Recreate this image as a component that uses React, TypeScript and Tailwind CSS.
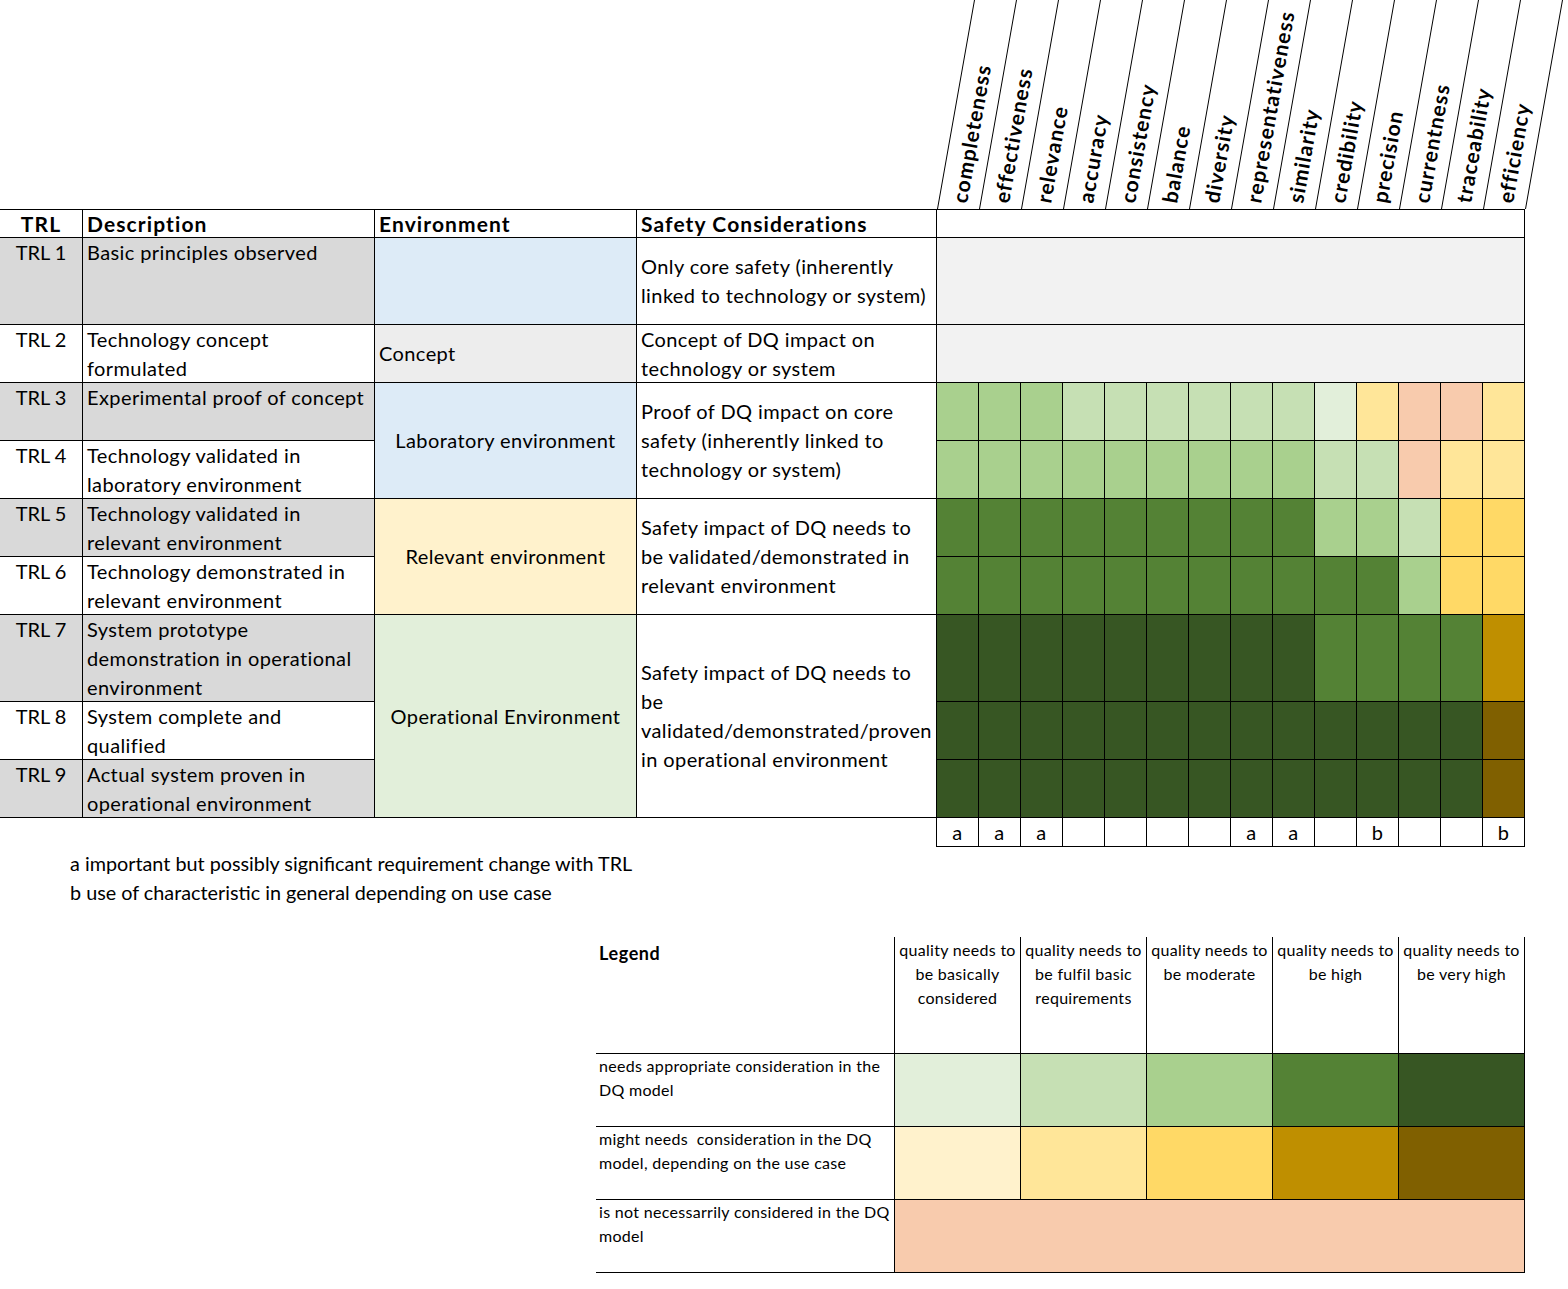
import React from "react";

const C: Record<string, string> = {
  L1: "bg-[#e2efda]",
  L2: "bg-[#c6e0b4]",
  L3: "bg-[#a9d08e]",
  L4: "bg-[#548235]",
  L5: "bg-[#375623]",
  Y1: "bg-[#fff2cc]",
  Y2: "bg-[#ffe699]",
  Y3: "bg-[#ffd966]",
  Y4: "bg-[#bf8f00]",
  Y5: "bg-[#806000]",
  N: "bg-[#f8cbad]",
};

const rep = (v: string, n: number) => Array.from({ length: n }, () => v);

const matrix: Record<number, string[]> = {
  3: ["L3", "L3", "L3", ...rep("L2", 6), "L1", "Y2", "N", "N", "Y2"],
  4: [...rep("L3", 9), "L2", "L2", "N", "Y2", "Y2"],
  5: [...rep("L4", 9), "L3", "L3", "L2", "Y3", "Y3"],
  6: [...rep("L4", 11), "L3", "Y3", "Y3"],
  7: [...rep("L5", 9), ...rep("L4", 4), "Y4"],
  8: [...rep("L5", 13), "Y5"],
  9: [...rep("L5", 13), "Y5"],
};

const headers = [
  "completeness",
  "effectiveness",
  "relevance",
  "accuracy",
  "consistency",
  "balance",
  "diversity",
  "representativeness",
  "similarity",
  "credibility",
  "precision",
  "currentness",
  "traceability",
  "efficiency",
];

const footer = ["a", "a", "a", "", "", "", "", "a", "a", "", "b", "", "", "b"];

const desc: Record<number, string[]> = {
  1: ["Basic principles observed"],
  2: ["Technology concept", "formulated"],
  3: ["Experimental proof of concept"],
  4: ["Technology validated in", "laboratory environment"],
  5: ["Technology validated in", "relevant environment"],
  6: ["Technology demonstrated in", "relevant environment"],
  7: ["System prototype", "demonstration in operational", "environment"],
  8: ["System complete and", "qualified"],
  9: ["Actual system proven in", "operational environment"],
};

const Lines = ({ lines }: { lines: string[] }) => (
  <div>
    {lines.map((l, i) => (
      <div key={i} className="whitespace-pre">
        {l}
      </div>
    ))}
  </div>
);

const cell = "border-r border-b border-black";
const hd = "font-bold text-[21px] tracking-[1.1px]";

function TrlCells({ n }: { n: number }) {
  const shade = n % 2 === 1 ? "bg-[#d9d9d9]" : "bg-white";
  return (
    <>
      <div className={`${cell} ${shade} text-center tracking-normal`}>TRL {n}</div>
      <div className={`${cell} ${shade} pl-[4px]`}>
        <Lines lines={desc[n]} />
      </div>
    </>
  );
}

function MatrixRow({ n }: { n: number }) {
  return (
    <>
      {matrix[n].map((k, i) => (
        <div key={i} className={`${cell} ${C[k]}`} />
      ))}
    </>
  );
}

function Safety({ lines, span }: { lines: string[]; span: string }) {
  return (
    <div className={`${cell} ${span} bg-white flex items-center pl-[4px]`}>
      <Lines lines={lines} />
    </div>
  );
}

export default function App() {
  return (
    <div className="w-[1568px] h-[1289px] bg-white text-black font-['Lato',sans-serif] text-[20px] leading-[29px] tracking-[0.4px] overflow-hidden">
      {/* rotated column headers */}
      <svg width="1568" height="209" className="block">
        {Array.from({ length: 15 }, (_, i) => {
          const x0 = 937 + 42 * i;
          return (
            <line key={i} x1={x0 + 0.5} y1={209} x2={x0 + 37.5} y2={0} stroke="#000" strokeWidth={1} />
          );
        })}
        {headers.map((h, i) => {
          const x = 937 + 42 * i + 30;
          const y = 204;
          return (
            <text
              key={h}
              x={x}
              y={y}
              transform={`rotate(-80 ${x} ${y})`}
              fontFamily="Lato, sans-serif"
              fontWeight={700}
              fontSize={21}
              letterSpacing={1}
              fill="#000"
            >
              {h}
            </text>
          );
        })}
      </svg>

      {/* main table */}
      <div className="grid grid-cols-[83px_292px_262px_300px_repeat(14,42px)] grid-rows-[29px_87px_58px_58px_58px_58px_58px_87px_58px_58px_29px] w-[1525px]">
        {/* header row */}
        <div className={`${cell} border-t ${hd} text-center leading-[27px]`}>TRL</div>
        <div className={`${cell} border-t ${hd} pl-[4px] leading-[27px]`}>Description</div>
        <div className={`${cell} border-t ${hd} pl-[4px] leading-[27px]`}>Environment</div>
        <div className={`${cell} border-t ${hd} pl-[4px] leading-[27px]`}>Safety Considerations</div>
        <div className={`${cell} border-t col-span-14`} />

        {/* TRL 1 */}
        <TrlCells n={1} />
        <div className={`${cell} bg-[#ddebf7]`} />
        <Safety lines={["Only core safety (inherently", "linked to technology or system)"]} span="" />
        <div className={`${cell} col-span-14 bg-[#f2f2f2]`} />

        {/* TRL 2 */}
        <TrlCells n={2} />
        <div className={`${cell} bg-[#ededed] flex items-center pl-[4px]`}>Concept</div>
        <Safety lines={["Concept of DQ impact on", "technology or system"]} span="" />
        <div className={`${cell} col-span-14 bg-[#f2f2f2]`} />

        {/* TRL 3 */}
        <TrlCells n={3} />
        <div className={`${cell} row-span-2 bg-[#ddebf7] flex items-center justify-center`}>Laboratory environment</div>
        <Safety
          lines={["Proof of DQ impact on core", "safety (inherently linked to", "technology or system)"]}
          span="row-span-2"
        />
        <MatrixRow n={3} />

        {/* TRL 4 */}
        <TrlCells n={4} />
        <MatrixRow n={4} />

        {/* TRL 5 */}
        <TrlCells n={5} />
        <div className={`${cell} row-span-2 bg-[#fff2cc] flex items-center justify-center`}>Relevant environment</div>
        <Safety
          lines={["Safety impact of DQ needs to", "be validated/demonstrated in", "relevant environment"]}
          span="row-span-2"
        />
        <MatrixRow n={5} />

        {/* TRL 6 */}
        <TrlCells n={6} />
        <MatrixRow n={6} />

        {/* TRL 7 */}
        <TrlCells n={7} />
        <div className={`${cell} row-span-3 bg-[#e2efda] flex items-center justify-center`}>Operational Environment</div>
        <Safety
          lines={["Safety impact of DQ needs to", "be", "validated/demonstrated/proven", "in operational environment"]}
          span="row-span-3"
        />
        <MatrixRow n={7} />

        {/* TRL 8 */}
        <TrlCells n={8} />
        <MatrixRow n={8} />

        {/* TRL 9 */}
        <TrlCells n={9} />
        <MatrixRow n={9} />

        {/* footer notes row */}
        <div className="col-span-4 border-r border-black" />
        {footer.map((f, i) => (
          <div key={i} className={`${cell} text-center leading-[28px]`}>
            {f}
          </div>
        ))}
      </div>

      {/* footnotes */}
      <div className="pl-[70px] pt-[2px] text-[19.8px] tracking-normal">
        <div>a important but possibly significant requirement change with TRL</div>
        <div>b use of characteristic in general depending on use case</div>
      </div>

      {/* legend */}
      <div className="ml-[596px] mt-[30px] grid grid-cols-[299px_repeat(5,126px)] grid-rows-[117px_73px_73px_73px] w-[929px] text-[16px] leading-[24px] tracking-[0.3px]">
        <div className={`${cell} pl-[3px] pt-[4px] font-bold text-[18px] tracking-[0.6px]`}>Legend</div>
        {[
          ["quality needs to", "be basically", "considered"],
          ["quality needs to", "be fulfil basic", "requirements"],
          ["quality needs to", "be moderate"],
          ["quality needs to", "be high"],
          ["quality needs to", "be very high"],
        ].map((ls, i) => (
          <div key={i} className={`${cell} text-center pt-[1px]`}>
            <Lines lines={ls} />
          </div>
        ))}

        <div className={`${cell} pl-[3px]`}>
          <Lines lines={["needs appropriate consideration in the", "DQ model"]} />
        </div>
        {["L1", "L2", "L3", "L4", "L5"].map((k) => (
          <div key={k} className={`${cell} ${C[k]}`} />
        ))}

        <div className={`${cell} pl-[3px]`}>
          <Lines lines={["might needs  consideration in the DQ", "model, depending on the use case"]} />
        </div>
        {["Y1", "Y2", "Y3", "Y4", "Y5"].map((k) => (
          <div key={k} className={`${cell} ${C[k]}`} />
        ))}

        <div className={`${cell} pl-[3px]`}>
          <Lines lines={["is not necessarrily considered in the DQ", "model"]} />
        </div>
        <div className={`${cell} col-span-5 ${C.N}`} />
      </div>
    </div>
  );
}
